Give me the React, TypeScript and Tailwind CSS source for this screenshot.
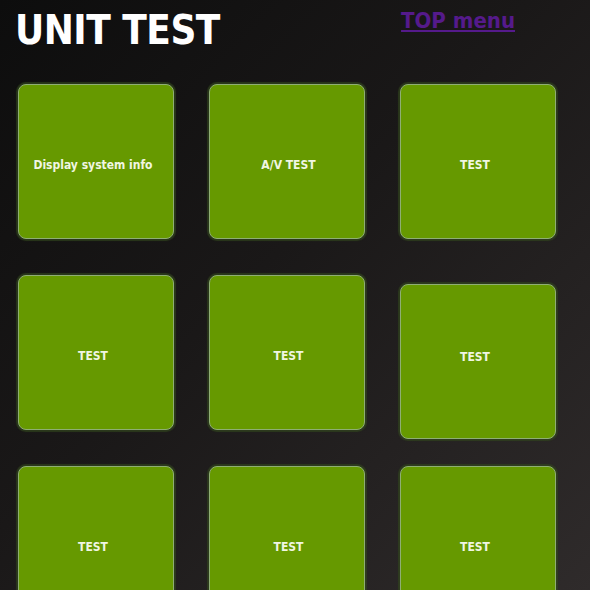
import React from "react";

const tiles = [
  { label: "Display system info", shift: false },
  { label: "A/V TEST", shift: false },
  { label: "TEST", shift: false },
  { label: "TEST", shift: false },
  { label: "TEST", shift: false },
  { label: "TEST", shift: true },
  { label: "TEST", shift: false },
  { label: "TEST", shift: false },
  { label: "TEST", shift: false },
];

const Tile = ({ label, shift, mid }: { label: string; shift: boolean; mid: boolean }) => (
  <div
    className={
      "w-[156px] h-[155px] rounded-[8px] bg-[#669900] border border-[#8fae74] shadow-[0_0_1px_2px_rgba(50,70,30,0.7)] flex items-center justify-center text-[12px] font-bold text-[#f0f6e2] " +
      (shift ? "mt-[9px] mb-[-9px] pb-[10px] " : "pt-[7px] ") +
      (mid ? "pl-[3px]" : "pr-[6px]")
    }
  >
    {label}
  </div>
);

export default function App() {
  return (
    <div
      className="w-[590px] h-[590px] overflow-hidden bg-[linear-gradient(135deg,#0d0d0d_0%,#1a1818_45%,#2f2b2b_100%)]"
      style={{ fontFamily: '"DejaVu Sans Condensed", "DejaVu Sans", sans-serif' }}
    >
      <div className="flex items-start pt-[6px]">
        <h1 className="ml-[15px] text-[40px] leading-[48px] font-bold text-white tracking-[-0.5px]">UNIT TEST</h1>
        <a href="#" className="ml-auto mr-[75px] mt-[1px] text-[22px] leading-[28px] font-bold text-[#551a8b] underline">
          TOP menu
        </a>
      </div>
      <div className="grid grid-cols-[156px_156px_156px] gap-x-[35px] gap-y-[36px] items-start pl-[18px] pt-[30px]">
        {tiles.map((t, i) => (
          <Tile key={i} label={t.label} shift={t.shift} mid={i % 3 === 1} />
        ))}
      </div>
    </div>
  );
}
